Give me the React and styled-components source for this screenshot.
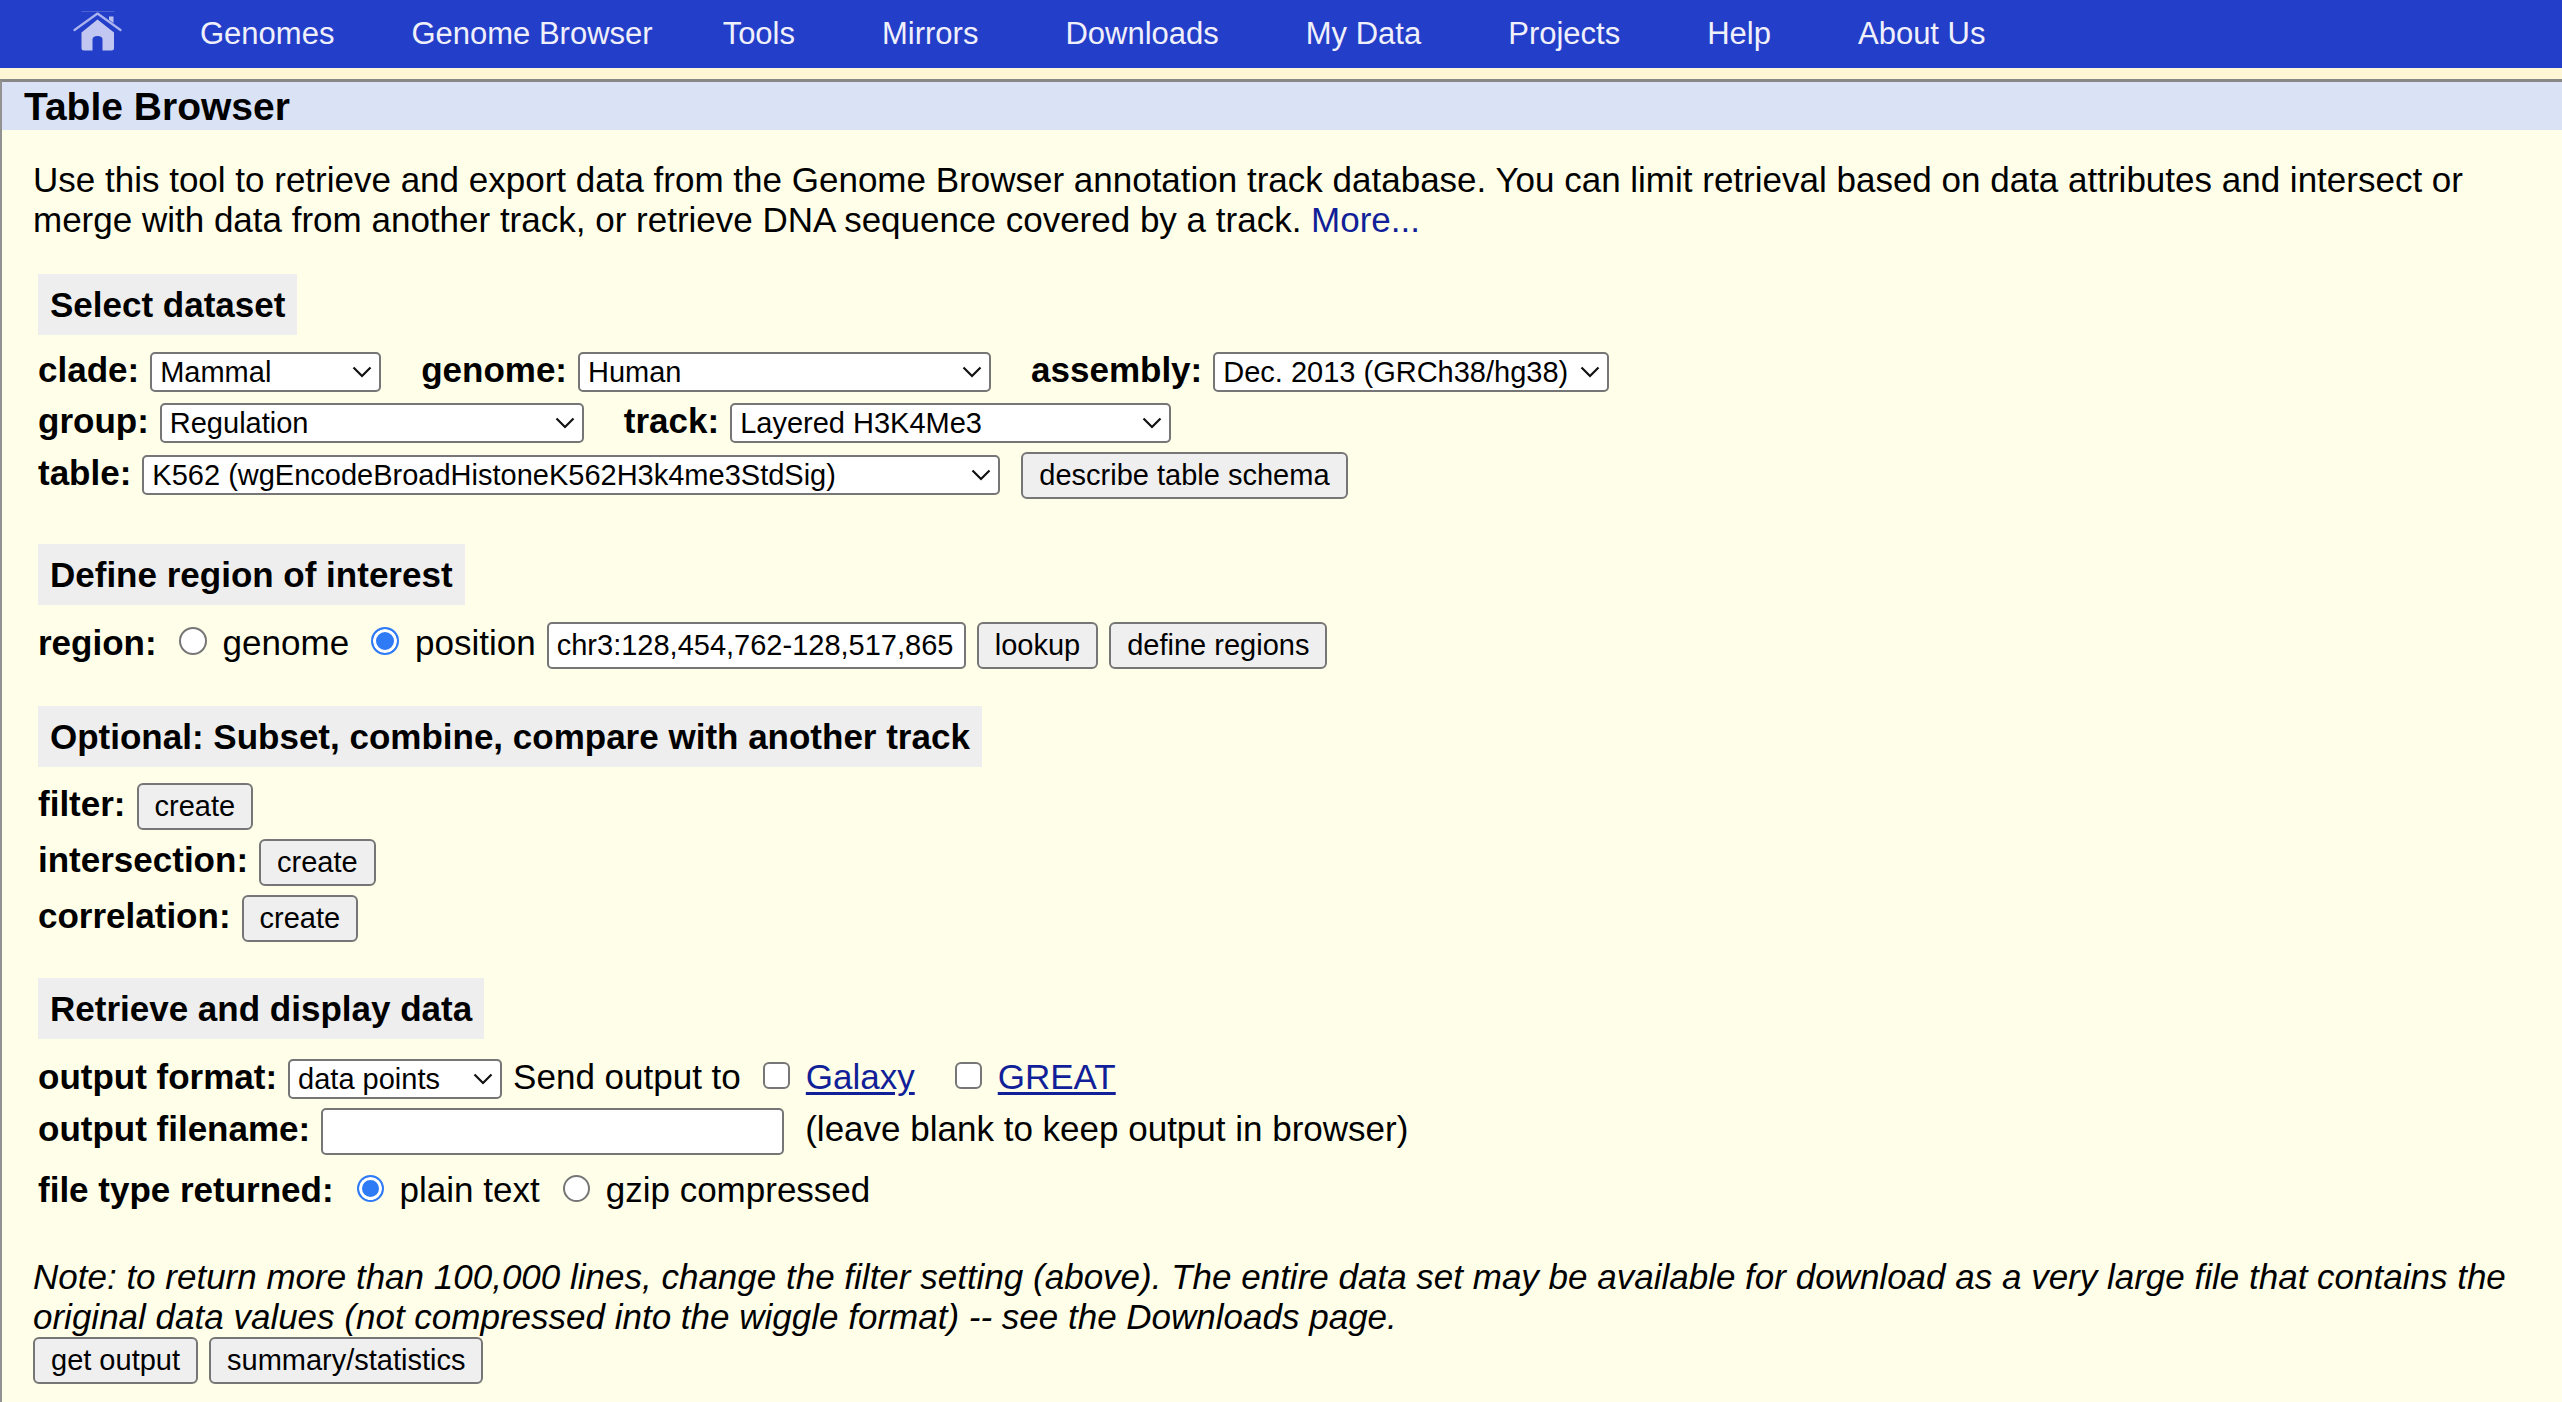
import React from 'react';
import styled, { createGlobalStyle } from 'styled-components';

const GlobalStyle = createGlobalStyle`
  *, *::before, *::after { box-sizing: border-box; }
  body {
    margin: 0;
    background: #fffee8;
    color: #000;
    font-family: "Liberation Sans", Arial, Helvetica, sans-serif;
    font-size: 35px;
    line-height: 40px;
  }
`;

const NavBar = styled.nav`
  display: flex;
  align-items: center;
  height: 68px;
  padding: 0 73px;
  background: #233ec9;
`;

const HomeLink = styled.a`
  display: block;
  width: 50px;
  height: 44px;
  margin-bottom: 4px;
`;

const NavLink = styled.a`
  margin-left: ${(p) => p.$gap}px;
  color: #f0f0fb;
  font-size: 31px;
  line-height: 36px;
  text-decoration: none;
  white-space: nowrap;
`;

const Strip = styled.div`
  height: 11px;
  background: #fff6d6;
`;

const Panel = styled.main`
  min-height: calc(100vh - 79px);
  border-top: 3px solid #888;
  border-left: 2px solid #929292;
`;

const Title = styled.h1`
  margin: 0;
  padding: 2px 22px 0;
  background: #dae3f6;
  font-size: 39px;
  line-height: 46px;
`;

const Content = styled.form`
  padding: 30px 31px 18px;
`;

const Text = styled.p`
  margin: 0;
`;

const Note = styled(Text)`
  margin-top: 47px;
  font-style: italic;
`;

const MoreLink = styled.a`
  color: #111f98;
  text-decoration: none;
`;

const SiteLink = styled.a`
  color: #111f98;
  text-decoration: underline;
  text-decoration-thickness: 3px;
  text-underline-offset: 3px;
`;

const Section = styled.section`
  margin: ${(p) => p.$space}px 5px 0;
`;

const Heading = styled.h2`
  width: fit-content;
  margin: 0;
  padding: 11px 12px 10px;
  background: #eee;
  font-size: 35px;
  line-height: 40px;
`;

const Rows = styled.div`
  display: flex;
  flex-direction: column;
  gap: 9px;
  margin-top: ${(p) => p.$space}px;
`;

const Row = styled.div`
  display: flex;
  flex-wrap: wrap;
  align-items: baseline;
  column-gap: ${(p) => p.$gap || 11}px;
  padding-top: ${(p) => p.$pad || 0}px;
`;

const Field = styled.div`
  display: flex;
  align-items: baseline;
  gap: 11px;
`;

const Label = styled.label`
  font-weight: bold;
  white-space: nowrap;
`;

const SelectBox = styled.div`
  display: grid;
  width: ${(p) => p.$width}px;
`;

const SelectControl = styled.select`
  grid-area: 1 / 1;
  appearance: none;
  width: 100%;
  height: 40px;
  margin: 0;
  padding: 0 34px 0 8px;
  border: 2px solid #767676;
  border-radius: 5px;
  background: #fff;
  color: #000;
  font-family: inherit;
  font-size: 29px;
  line-height: 36px;
`;

const Chevron = styled.svg`
  grid-area: 1 / 1;
  place-self: center end;
  width: 20px;
  height: 12px;
  margin-right: 9px;
  pointer-events: none;
`;

const TextInput = styled.input`
  width: ${(p) => p.$width}px;
  height: 47px;
  margin: 0;
  padding: 0 8px;
  border: 2px solid #767676;
  border-radius: 5px;
  background: #fff;
  color: #000;
  font-family: inherit;
  font-size: 29px;
`;

const Button = styled.button`
  height: 47px;
  margin: 0;
  padding: 0 16px;
  border: 2px solid #767676;
  border-radius: 6px;
  background: #efefef;
  color: #000;
  font-family: inherit;
  font-size: 29px;
  white-space: nowrap;
`;

const Tick = styled.input`
  appearance: none;
  flex: none;
  width: ${(p) => p.$size}px;
  height: ${(p) => p.$size}px;
  margin: 0 16px 0 11px;
  border: 2px solid #767676;
  border-radius: ${(p) => (p.type === 'radio' ? '50%' : '6px')};
  background: #fff;
  &:checked {
    border-color: #2f7bf6;
    background: #2f7bf6;
    box-shadow: inset 0 0 0 3px #fff;
  }
`;

const ChoiceLabel = styled.label`
  display: flex;
  align-items: baseline;
  white-space: nowrap;
`;

const Site = styled.div`
  display: flex;
  align-items: baseline;
  margin-right: 18px;
`;

const Actions = styled.div`
  display: flex;
  gap: 11px;
`;

function HomeIcon() {
  return (
    <svg viewBox="0 0 50 44" width="50" height="44" aria-hidden="true">
      <g fill="none" stroke="#aab3ee" strokeLinecap="round">
        <path d="M1.5 20 L24.5 3.5 L47.5 20" strokeWidth="2.2" strokeLinejoin="round" />
        <path d="M9 1.5 H41" strokeWidth="1" opacity="0.3" />
      </g>
      <path d="M36 6.5 H40.5 V13 L36 9.8 Z" fill="#b9c0f0" />
      <path
        d="M24.5 9.5 L41 22.5 V38 Q41 40.5 38.5 40.5 H29.5 V29.5 Q29.5 26 24.5 26 Q19.5 26 19.5 29.5 V40.5 H11 Q8.5 40.5 8.5 38 V22.5 Z"
        fill="#c1c7f1"
      />
    </svg>
  );
}

function Select({ id, width, value }) {
  return (
    <SelectBox $width={width}>
      <SelectControl id={id} defaultValue={value}>
        <option value={value}>{value}</option>
      </SelectControl>
      <Chevron viewBox="0 0 20 12" aria-hidden="true">
        <path d="M1.5 1.5 L10 10 L18.5 1.5" fill="none" stroke="#111" strokeWidth="2.2" />
      </Chevron>
    </SelectBox>
  );
}

function SelectField({ id, label, width, value }) {
  return (
    <Field>
      <Label htmlFor={id}>{label}</Label>
      <Select id={id} width={width} value={value} />
    </Field>
  );
}

function Choice({ name, size, checked, children }) {
  return (
    <ChoiceLabel>
      <Tick type="radio" name={name} $size={size} defaultChecked={checked} />
      <span>{children}</span>
    </ChoiceLabel>
  );
}

function SiteChoice({ id, name }) {
  return (
    <Site>
      <Tick type="checkbox" id={id} aria-labelledby={`${id}-link`} $size={27} />
      <SiteLink id={`${id}-link`} href={`#${id}`}>
        {name}
      </SiteLink>
    </Site>
  );
}

const navItems = [
  ['Genomes', 77],
  ['Genome Browser', 77],
  ['Tools', 70],
  ['Mirrors', 87],
  ['Downloads', 87],
  ['My Data', 87],
  ['Projects', 87],
  ['Help', 87],
  ['About Us', 87],
];

const subsetItems = ['filter', 'intersection', 'correlation'];

export default function App() {
  return (
    <>
      <GlobalStyle />
      <NavBar>
        <HomeLink href="#home" aria-label="Home">
          <HomeIcon />
        </HomeLink>
        {navItems.map(([name, gap]) => (
          <NavLink key={name} href="#" $gap={gap}>
            {name}
          </NavLink>
        ))}
      </NavBar>
      <Strip />
      <Panel>
        <Title>Table Browser</Title>
        <Content onSubmit={(e) => e.preventDefault()}>
          <Text>
            Use this tool to retrieve and export data from the Genome Browser annotation track
            database. You can limit retrieval based on data attributes and intersect or merge with
            data from another track, or retrieve DNA sequence covered by a track.{' '}
            <MoreLink href="#more">More...</MoreLink>
          </Text>

          <Section $space={34}>
            <Heading>Select dataset</Heading>
            <Rows $space={15}>
              <Row $gap={40}>
                <SelectField id="clade" label="clade:" width={231} value="Mammal" />
                <SelectField id="genome" label="genome:" width={413} value="Human" />
                <SelectField
                  id="assembly"
                  label="assembly:"
                  width={396}
                  value="Dec. 2013 (GRCh38/hg38)"
                />
              </Row>
              <Row $gap={40}>
                <SelectField id="group" label="group:" width={424} value="Regulation" />
                <SelectField id="track" label="track:" width={441} value="Layered H3K4Me3" />
              </Row>
              <Row $gap={21}>
                <SelectField
                  id="table"
                  label="table:"
                  width={858}
                  value="K562 (wgEncodeBroadHistoneK562H3k4me3StdSig)"
                />
                <Button type="button">describe table schema</Button>
              </Row>
            </Rows>
          </Section>

          <Section $space={45}>
            <Heading>Define region of interest</Heading>
            <Rows $space={17}>
              <Row role="radiogroup" aria-labelledby="region-label">
                <Label as="span" id="region-label">
                  region:
                </Label>
                <Choice name="region" size={28}>
                  genome
                </Choice>
                <Choice name="region" size={28} checked>
                  position
                </Choice>
                <TextInput
                  aria-label="position"
                  $width={419}
                  defaultValue="chr3:128,454,762-128,517,865"
                />
                <Button type="button">lookup</Button>
                <Button type="button">define regions</Button>
              </Row>
            </Rows>
          </Section>

          <Section $space={37}>
            <Heading>Optional: Subset, combine, compare with another track</Heading>
            <Rows $space={16}>
              {subsetItems.map((name) => (
                <Row key={name}>
                  <Label htmlFor={name}>{name}:</Label>
                  <Button type="button" id={name}>
                    create
                  </Button>
                </Row>
              ))}
            </Rows>
          </Section>

          <Section $space={36}>
            <Heading>Retrieve and display data</Heading>
            <Rows $space={18}>
              <Row>
                <SelectField id="format" label="output format:" width={214} value="data points" />
                <span>Send output to</span>
                <SiteChoice id="galaxy" name="Galaxy" />
                <SiteChoice id="great" name="GREAT" />
              </Row>
              <Row $gap={21}>
                <Field>
                  <Label htmlFor="filename">output filename:</Label>
                  <TextInput id="filename" $width={463} />
                </Field>
                <span>(leave blank to keep output in browser)</span>
              </Row>
              <Row $gap={12} $pad={6} role="radiogroup" aria-labelledby="type-label">
                <Label as="span" id="type-label">
                  file type returned:
                </Label>
                <Choice name="type" size={27} checked>
                  plain text
                </Choice>
                <Choice name="type" size={27}>
                  gzip compressed
                </Choice>
              </Row>
            </Rows>
          </Section>

          <Note>
            Note: to return more than 100,000 lines, change the filter setting (above). The entire
            data set may be available for download as a very large file that contains the original
            data values (not compressed into the wiggle format) -- see the Downloads page.
          </Note>
          <Actions>
            <Button type="submit">get output</Button>
            <Button type="button">summary/statistics</Button>
          </Actions>
        </Content>
      </Panel>
    </>
  );
}
